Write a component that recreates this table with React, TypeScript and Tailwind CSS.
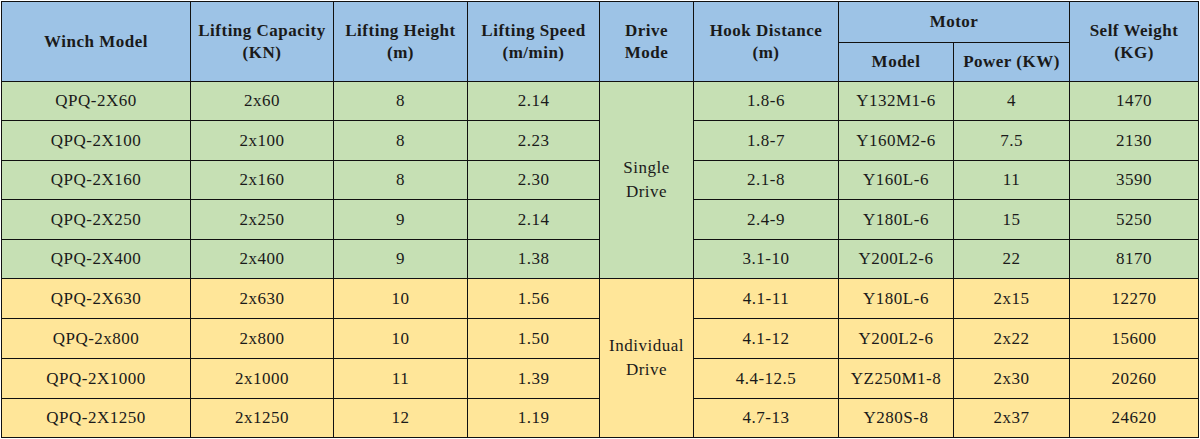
const rows = [
  ["QPQ-2X60", "2x60", "8", "2.14", "1.8-6", "Y132M1-6", "4", "1470"],
  ["QPQ-2X100", "2x100", "8", "2.23", "1.8-7", "Y160M2-6", "7.5", "2130"],
  ["QPQ-2X160", "2x160", "8", "2.30", "2.1-8", "Y160L-6", "11", "3590"],
  ["QPQ-2X250", "2x250", "9", "2.14", "2.4-9", "Y180L-6", "15", "5250"],
  ["QPQ-2X400", "2x400", "9", "1.38", "3.1-10", "Y200L2-6", "22", "8170"],
  ["QPQ-2X630", "2x630", "10", "1.56", "4.1-11", "Y180L-6", "2x15", "12270"],
  ["QPQ-2x800", "2x800", "10", "1.50", "4.1-12", "Y200L2-6", "2x22", "15600"],
  ["QPQ-2X1000", "2x1000", "11", "1.39", "4.4-12.5", "YZ250M1-8", "2x30", "20260"],
  ["QPQ-2X1250", "2x1250", "12", "1.19", "4.7-13", "Y280S-8", "2x37", "24620"],
];

const heights = ["h-[39px]", "h-[40px]", "h-[39px]", "h-[40px]", "h-[39px]", "h-[40px]", "h-[40px]", "h-[40px]", "h-[39px]"];

const th = "border border-[#111] bg-[#9dc3e6] font-bold text-[17px] tracking-[0.5px] leading-[22px] text-center align-middle";
const td = "border border-[#111] text-[17px] tracking-[0.5px] text-center align-middle";

export default function App() {
  return (
    <div className="bg-white w-[1200px] h-[439px] pt-px pl-px font-['Liberation_Serif'] text-[#1a1a1a]">
      <table className="border-collapse table-fixed w-[1197px]">
        <colgroup>
          <col className="w-[189px]" />
          <col className="w-[143px]" />
          <col className="w-[134px]" />
          <col className="w-[132px]" />
          <col className="w-[94px]" />
          <col className="w-[145px]" />
          <col className="w-[115px]" />
          <col className="w-[116px]" />
          <col className="w-[129px]" />
        </colgroup>
        <thead>
          <tr className="h-[41px]">
            <th rowSpan={2} className={th}>Winch Model</th>
            <th rowSpan={2} className={th}>Lifting Capacity<br />(KN)</th>
            <th rowSpan={2} className={th}>Lifting Height<br />(m)</th>
            <th rowSpan={2} className={th}>Lifting Speed<br />(m/min)</th>
            <th rowSpan={2} className={th}>Drive<br />Mode</th>
            <th rowSpan={2} className={th}>Hook Distance<br />(m)</th>
            <th colSpan={2} className={th}>Motor</th>
            <th rowSpan={2} className={th}>Self Weight<br />(KG)</th>
          </tr>
          <tr className="h-[39px]">
            <th className={th}>Model</th>
            <th className={th}>Power (KW)</th>
          </tr>
        </thead>
        <tbody>
          {rows.map((r, i) => {
            const bg = i < 5 ? "bg-[#c6e0b4]" : "bg-[#ffe699]";
            return (
              <tr key={r[0]} className={`${heights[i]} ${bg}`}>
                <td className={td}>{r[0]}</td>
                <td className={td}>{r[1]}</td>
                <td className={td}>{r[2]}</td>
                <td className={td}>{r[3]}</td>
                {i === 0 && (
                  <td rowSpan={5} className={`${td} leading-[24px]`}>Single<br />Drive</td>
                )}
                {i === 5 && (
                  <td rowSpan={4} className={`${td} leading-[24px]`}>Individual<br />Drive</td>
                )}
                <td className={td}>{r[4]}</td>
                <td className={td}>{r[5]}</td>
                <td className={td}>{r[6]}</td>
                <td className={td}>{r[7]}</td>
              </tr>
            );
          })}
        </tbody>
      </table>
    </div>
  );
}
